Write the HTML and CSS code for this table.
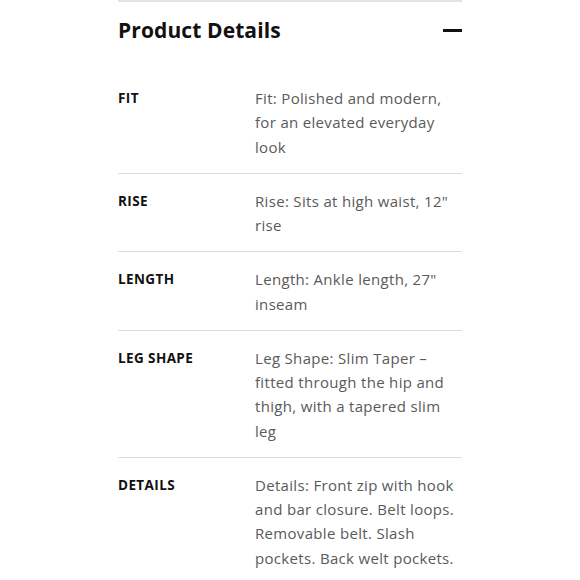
FILE: index.html
```html
<!DOCTYPE html>
<html lang="en">
<head>
<meta charset="utf-8">
<title>Product Details</title>
<link rel="stylesheet" href="styles.css">
</head>
<body>
<section class="accordion">
  <header class="acc-head">
    <h2 class="acc-title">Product Details</h2>
    <span class="acc-toggle" aria-hidden="true"></span>
  </header>
  <dl class="specs">
    <div class="spec">
      <dt class="spec-label">FIT</dt>
      <dd class="spec-value">Fit: Polished and modern, for an elevated everyday look</dd>
    </div>
    <div class="spec">
      <dt class="spec-label">RISE</dt>
      <dd class="spec-value">Rise: Sits at high waist, 12" rise</dd>
    </div>
    <div class="spec">
      <dt class="spec-label">LENGTH</dt>
      <dd class="spec-value">Length: Ankle length, 27" inseam</dd>
    </div>
    <div class="spec">
      <dt class="spec-label">LEG SHAPE</dt>
      <dd class="spec-value">Leg Shape: Slim Taper – fitted through the hip and thigh, with a tapered slim leg</dd>
    </div>
    <div class="spec">
      <dt class="spec-label">DETAILS</dt>
      <dd class="spec-value">Details: Front zip with hook and bar closure. Belt loops. Removable belt. Slash pockets. Back welt pockets.</dd>
    </div>
  </dl>
</section>
</body>
</html>
```
FILE: styles.css
```css
* { box-sizing: border-box; }
html, body { margin: 0; padding: 0; background: #fff; }
body {
  font-family: "Open Sans", "DejaVu Sans", sans-serif;
  color: #111;
  overflow: hidden;
}
.accordion {
  width: 344px;
  margin: 0 auto;
  border-top: 2px solid #e4e4e4;
}
.acc-head {
  display: flex;
  align-items: center;
  justify-content: space-between;
  padding: 14px 0 27px;
  height: 69px;
}
.acc-title {
  margin: 0;
  font-size: 21px;
  line-height: 28px;
  font-weight: 700;
  letter-spacing: 0.1px;
  color: #111;
}
.acc-toggle {
  display: block;
  width: 19px;
  height: 2.5px;
  background: #111;
  margin-top: 1px;
}
.specs { margin: 0; }
.spec {
  display: flex;
  padding: 15px 0 14px;
  border-bottom: 1px solid #dcdcdc;
}
.spec:last-child { border-bottom: 0; }
.spec-label {
  width: 137px;
  flex: none;
  font-size: 13.5px;
  font-weight: 700;
  line-height: 24.25px;
  letter-spacing: 0.4px;
  color: #111;
}
.spec-value {
  margin: 0;
  flex: 1;
  padding-right: 3px;
  font-size: 15px;
  line-height: 24.25px;
  color: #5a5a5a;
  letter-spacing: 0.32px;
}
```
